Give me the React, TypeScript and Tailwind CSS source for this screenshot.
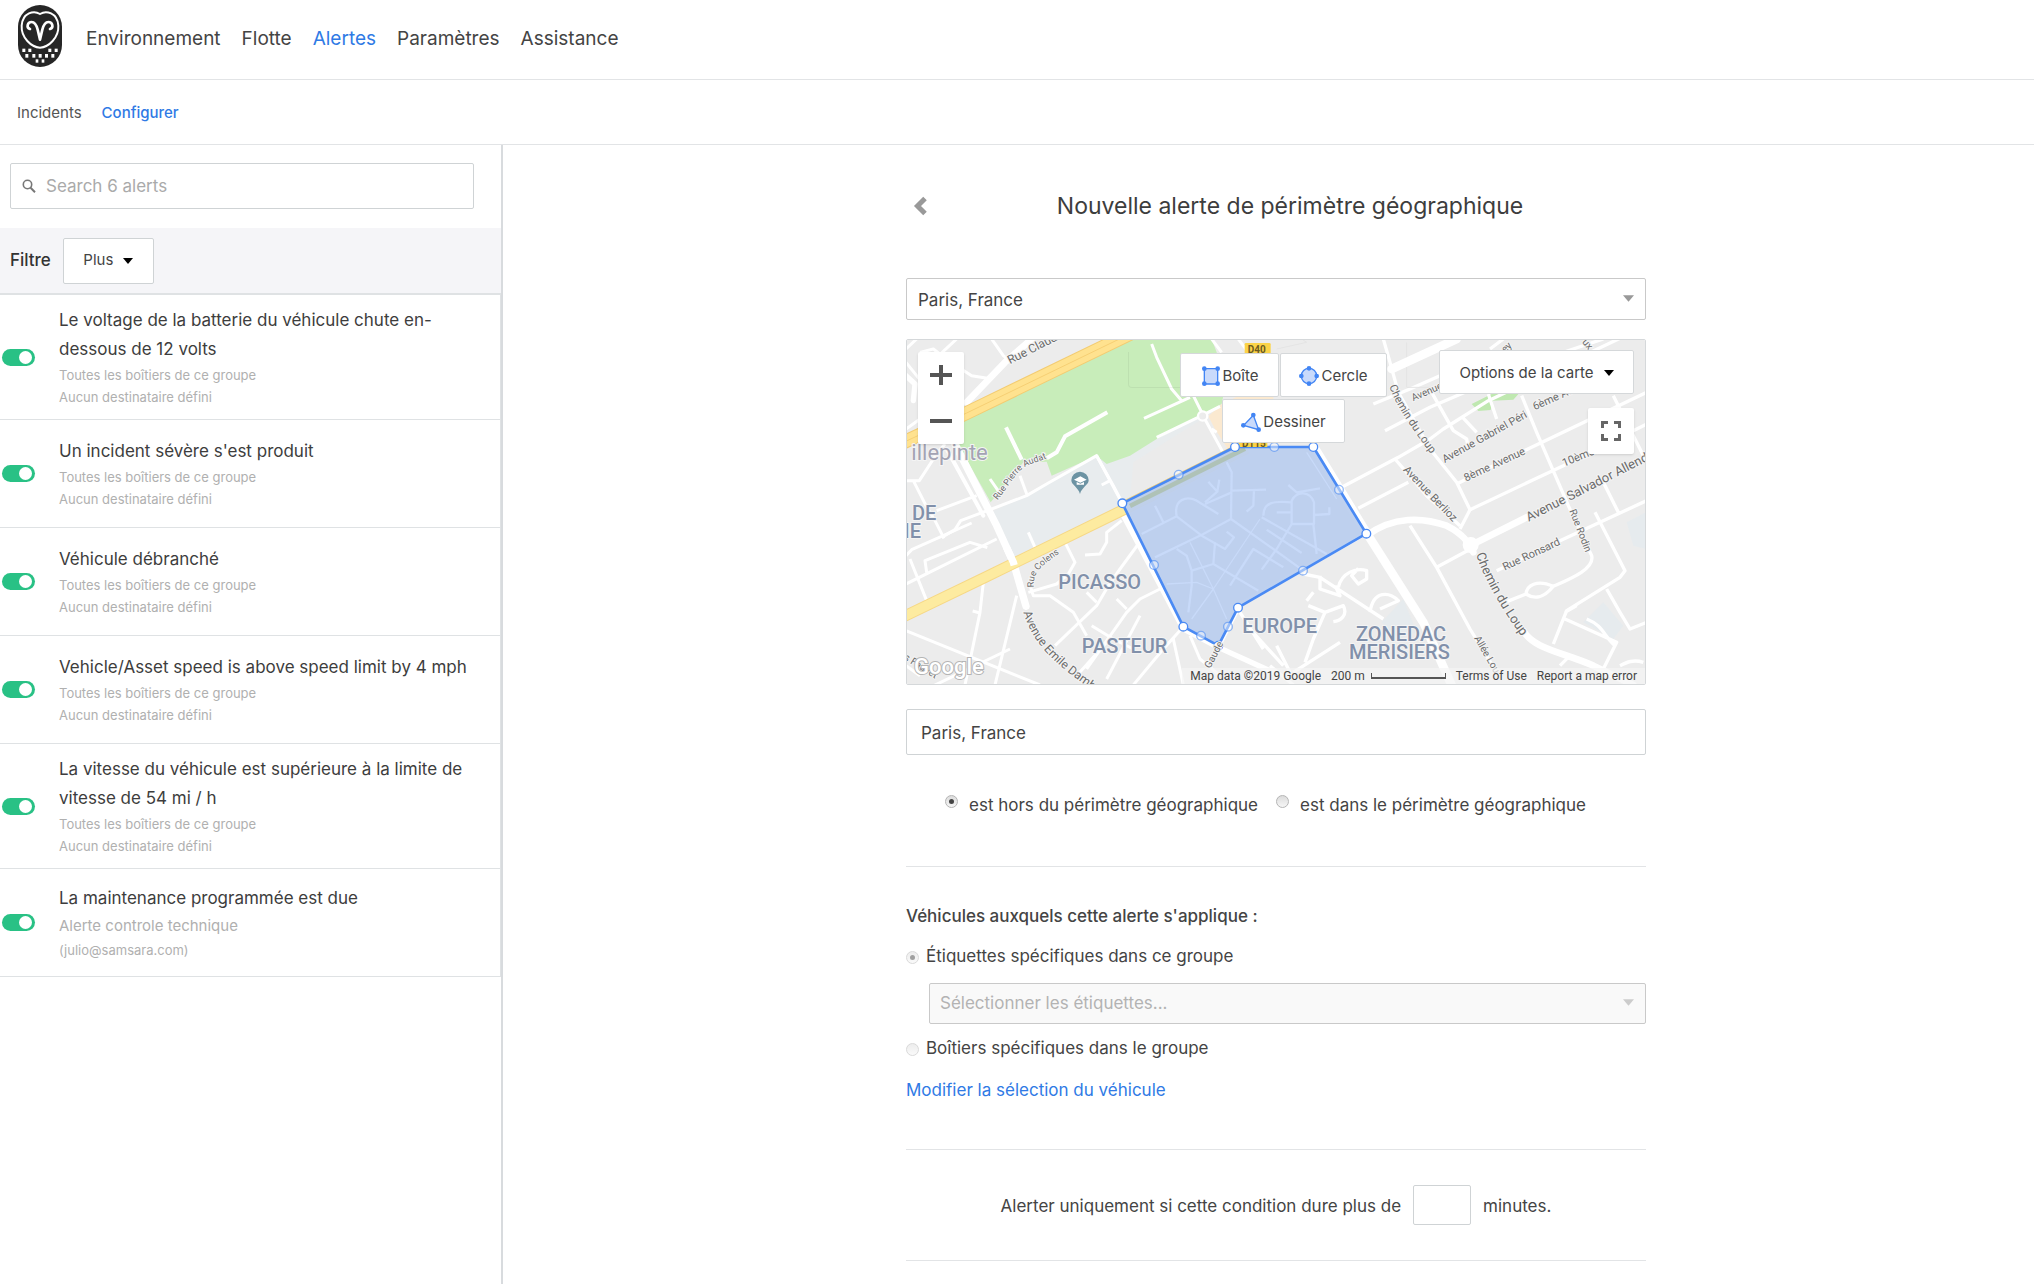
import type { ReactNode } from "react";
import clsx from "clsx";

interface Alert {
  id: string;
  title: string;
  target: string;
  recipient: string;
  largeTarget?: boolean;
}

const GROUP_TARGET = "Toutes les boîtiers de ce groupe";
const NO_RECIPIENT = "Aucun destinataire défini";

const navItems = ["Environnement", "Flotte", "Alertes", "Paramètres", "Assistance"];

const alerts: Alert[] = [
  { id: "battery", title: "Le voltage de la batterie du véhicule chute en-dessous de 12 volts", target: GROUP_TARGET, recipient: NO_RECIPIENT },
  { id: "incident", title: "Un incident sévère s'est produit", target: GROUP_TARGET, recipient: NO_RECIPIENT },
  { id: "unplugged", title: "Véhicule débranché", target: GROUP_TARGET, recipient: NO_RECIPIENT },
  { id: "limit", title: "Vehicle/Asset speed is above speed limit by 4 mph", target: GROUP_TARGET, recipient: NO_RECIPIENT },
  { id: "speed", title: "La vitesse du véhicule est supérieure à la limite de vitesse de 54 mi / h", target: GROUP_TARGET, recipient: NO_RECIPIENT },
  { id: "maintenance", title: "La maintenance programmée est due", target: "Alerte controle technique", recipient: "(julio@samsara.com)", largeTarget: true },
];

function Logo() {
  return (
    <svg className="w-11 h-[62px]" viewBox="0 0 132 186" fill="none" aria-hidden="true">
      <rect width="132" height="186" rx="66" fill="#262626" />
      <path
        d="M66 27 C48 16 14 22 11 62 C9 98 40 127 66 128 C92 127 123 98 121 62 C118 22 84 16 66 27 Z"
        stroke="#fff"
        strokeWidth="6"
      />
      <path
        d="M36 72 C24 68 28 51 41 51 C52 51 56 62 59 74 L66 104 L73 74 C76 62 80 51 91 51 C104 51 108 68 96 72"
        stroke="#fff"
        strokeWidth="8"
        strokeLinecap="round"
        strokeLinejoin="round"
      />
      <g fill="#fff">
        <rect x="13" y="131" width="9" height="10" />
        <rect x="31" y="131" width="9" height="10" />
        <rect x="91" y="131" width="9" height="10" />
        <rect x="110" y="131" width="9" height="10" />
        <rect x="22" y="147" width="9" height="11" />
        <rect x="43" y="147" width="9" height="11" />
        <rect x="62" y="147" width="9" height="11" />
        <rect x="81" y="147" width="9" height="11" />
        <rect x="100" y="147" width="9" height="11" />
        <rect x="53" y="163" width="8" height="10" />
        <rect x="71" y="163" width="8" height="10" />
      </g>
    </svg>
  );
}

function Caret({ className }: { className?: string }) {
  return (
    <svg className={className} viewBox="0 0 10 6" fill="currentColor" aria-hidden="true">
      <path d="M0 0h10L5 6z" />
    </svg>
  );
}

function AlertItem({ alert }: { alert: Alert }) {
  return (
    <li className="flex items-center min-h-[108px] py-[11px] border-b border-r border-[#dfe2e4]">
      <input
        type="checkbox"
        role="switch"
        id={alert.id}
        defaultChecked
        className="appearance-none relative shrink-0 ml-0.5 mr-6 w-[33px] h-[17px] rounded-full bg-gray-300 checked:bg-[#29c185] before:absolute before:right-[3px] before:top-0.5 before:size-[13px] before:rounded-full before:bg-white"
      />
      <label htmlFor={alert.id} className="flex-1 min-w-0 pr-5">
        <span className="block text-[17px] leading-[29px] text-[#3d3d3d]">{alert.title}</span>
        <span
          className={clsx(
            "block text-[#b0b0b0]",
            alert.largeTarget ? "text-[15px] leading-[26px]" : "text-[13px] leading-[22px]"
          )}
        >
          {alert.target}
        </span>
        <span className="block text-[13px] leading-[22px] text-[#b0b0b0]">{alert.recipient}</span>
      </label>
    </li>
  );
}

function Sidebar() {
  return (
    <aside className="w-[503px] shrink-0 border-r-2 border-[#d8dbde]">
      <div className="pl-2.5 pr-[27px] pt-[18px] pb-[19px]">
        <label className="flex items-center gap-2.5 h-[46px] px-[11px] border border-[#cfd3d5] rounded-xs">
          <svg className="size-3.5 text-[#777]" viewBox="0 0 14 14" fill="none" stroke="currentColor" aria-hidden="true">
            <circle cx="5.5" cy="5.5" r="4.2" strokeWidth="1.6" />
            <path d="M8.6 8.8 L13 13.2" strokeWidth="2" />
          </svg>
          <input
            type="text"
            aria-label="Search alerts"
            placeholder="Search 6 alerts"
            className="flex-1 pt-0.5 text-[17px] text-[#444] placeholder:text-[#aaa] outline-none"
          />
        </label>
      </div>
      <div className="flex items-center gap-3 h-[67px] pl-2.5 bg-[#f5f5f8] border-b-2 border-[#dfe2e4]">
        <span className="text-[17px] font-medium text-[#333]">Filtre</span>
        <button type="button" className="flex items-center justify-center gap-2.5 w-[91px] h-[46px] bg-white border border-[#cfd3d5] rounded-xs text-[15px] text-[#444]">
          Plus
          <Caret className="w-2.5 h-1.5 text-black" />
        </button>
      </div>
      <ul>
        {alerts.map((alert) => (
          <AlertItem key={alert.id} alert={alert} />
        ))}
      </ul>
    </aside>
  );
}

const vertices = [
  [667, 523],
  [1005, 354],
  [1240, 354],
  [1399, 614],
  [1014, 836],
  [955, 950],
  [850, 893],
];

const midpoints = [
  [836, 437],
  [1123, 354],
  [1317, 482],
  [1209, 725],
  [984, 893],
  [903, 920],
  [762, 708],
];

// Three drawing units to one screen pixel.
function MapCanvas() {
  return (
    <svg className="block w-full h-full" viewBox="21 33 2214 1032" preserveAspectRatio="xMidYMid slice" fill="none" role="img" aria-label="Carte">
      <defs>
        <path id="audat" d="M292 514 C330 465 350 430 372 415 C395 402 420 396 450 384" />
        <path id="colens" d="M402 775 C398 735 415 715 480 672" />
        <path id="emile" d="M370 850 C400 950 470 1010 590 1092" />
        <path id="loup-north" d="M1468 172 C1485 225 1530 290 1590 372" />
        <path id="loup-south" d="M1728 676 C1750 740 1790 820 1870 930" />
      </defs>
      <rect x="18" y="30" width="2220" height="1038" fill="#ececec" />

      {/* parks and school grounds */}
      <path d="M275 548 L380 500 L445 462 L590 380 L905 245 L975 370 L665 530 L335 690 Z" fill="#e8ecee" />
      <path d="M700 400 L910 268 L975 372 L690 510 Z" fill="#ebebeb" />
      <path d="M690 30 H935 L980 150 L965 225 L900 262 L770 330 L690 380 L620 405 L590 380 L455 440 L440 398 L370 400 L272 520 L165 330 L195 270 Z" fill="#c8edba" />
      <path d="M1715 225 L1775 195 L1860 190 L1840 212 L1778 215 L1772 243 L1735 246 Z" fill="#bfe8b0" />
      <path d="M925 262 L965 225 L1120 150 L1120 330 L985 362 L945 300 Z" fill="#fbe9d0" />
      <path d="M2180 580 L2238 550 V660 L2200 650 Z" fill="#e6ebee" />
      <path d="M2050 880 L2110 820 L2170 890 L2140 930 Z" fill="#e6ebee" />
      <path d="M1445 880 L1510 810 L1550 910 L1500 930 Z" fill="#e6ebee" />

      {/* small streets, west */}
      <g stroke="#fff" strokeWidth="9" strokeLinejoin="round">
        <path d="M100 95 L170 30 M60 70 L100 60 L145 95 L215 140 L262 148 M275 30 L310 80 L335 100 M18 300 L60 270" />
        <path d="M18 100 L90 190 M18 455 L58 455 L110 375 L135 345 M40 455 L78 530 L105 575 L132 628" />
        <path d="M18 60 L50 30 M110 545 L230 500 M125 625 L165 602 L182 575 L270 542 L380 500 L445 462 L590 380 L665 520" />
        <path d="M360 440 L382 500 M270 450 L298 490 M18 680 L35 662 L215 582 M30 690 L82 820 M80 730 L75 695 L210 640 L262 656 M18 765 L290 630" />
        <path d="M250 760 L240 850 L195 1068 M218 846 L240 852 M350 800 L285 1068 M18 905 L420 1068 M18 1010 L60 1040 M330 960 L18 1110" />
        <path d="M385 610 L405 655 M495 640 L525 700 L505 735 L470 765 L385 790 M390 770 L400 800 L450 800 L520 850 L560 920" />
        <path d="M665 575 L620 610 L620 640 L600 675 L555 678 M715 645 L660 720 L625 770 L590 830 L465 950" />
        <path d="M780 780 L720 810 L680 850 L560 1020 M650 810 L680 840 M575 890 L640 930 L700 960 M590 820 L560 790 M620 940 L530 1040 M850 893 L790 960 L700 1068 M820 930 L850 1068 M870 920 L900 990 L960 1040 M720 860 L620 1050" />
        <path d="M318 295 L365 392 M440 388 L470 370 L495 322 L622 250" strokeWidth="12" />
        <path d="M755 45 L770 85 L815 180 L845 215 M732 268 L870 205 M880 200 L910 260 M960 232 L905 260 L770 325 M910 262 L970 372 M935 300 L950 310" />
        <path d="M605 468 L630 455 M935 30 L965 70 M1015 30 L1060 90 M590 380 L640 470 L668 523" />
      </g>
      <circle cx="908" cy="261" r="14" fill="#ececec" stroke="#fff" strokeWidth="7" />

      {/* small streets, east */}
      <g transform="translate(1110 0)" stroke="#fff" strokeWidth="10" strokeLinejoin="round">
        <path d="M340 30 L360 100 L385 190 L480 360 L560 460 L600 542 L570 600 M310 225 L420 180 L510 140 M345 305 L480 235 L655 160" />
        <path d="M215 475 L385 385 L480 330 L520 300 L655 215 L1130 -10 M265 538 L415 460 M375 390 L470 500 L570 590" />
        <path d="M485 190 L550 305 L590 330 L595 360 M575 262 L620 310 M655 195 L680 270" />
        <path d="M560 465 L700 395 L1130 190 M600 542 L880 410 L1130 285 M1030 200 L1130 400 M755 200 L800 310 L895 530 L965 680 C975 720 900 750 850 772 C820 810 790 810 768 795 C770 770 800 750 850 772 M768 795 L705 820" />
        <path d="M500 715 L620 650 M420 590 L500 715 L600 900 L680 1030 M1000 460 L1045 550 M680 725 L870 635 L1130 515 M975 550 L1065 725 L1050 745 L890 845 L850 945 M885 870 L1040 940 L1000 1020 M920 830 L885 850 M1010 780 L1050 850 L1080 900 L1130 880 M950 870 C1000 890 1000 920 1035 950 M870 1010 L900 980" />
        <path d="M660 60 L700 30 M820 90 L1000 30 M1050 1010 C1070 1000 1090 990 1120 1000" />
        <path d="M100 735 L150 745 L340 870 M150 740 L150 780 L210 800 L195 770 M205 775 C215 730 260 715 290 725 L290 750 L265 765 L245 740 L265 718 M110 815 L130 790 M115 830 L165 850 L220 830 C235 860 210 875 190 878 M165 850 L130 930 L105 1000 M300 850 C310 780 360 790 385 815 L330 840 M70 1030 L210 940 M20 950 L60 1030 M-60 900 L40 1010 M-90 850 L-20 960 M0 1010 L70 1068" />
        <path d="M410 40 V175 H510 M20 60 L110 40 L95 30" stroke="#e4e4e4" strokeWidth="3" />
      </g>

      {/* avenues */}
      <g stroke="#fff" strokeLinejoin="round" strokeLinecap="round">
        <path d="M200 220 L315 100 L395 30" strokeWidth="20" />
        <path d="M18 140 L45 165 L40 215" strokeWidth="16" />
        <path d="M165 345 L290 590 L340 700 L378 832" strokeWidth="22" />
        <path d="M140 360 L250 560" strokeWidth="12" />
        <path d="M660 540 L850 900 L955 955 L1120 1030" strokeWidth="16" />
        <path d="M1005 835 L1400 612" strokeWidth="12" />
        <path d="M1240 350 L1400 612 L1570 880 L1660 1080" strokeWidth="26" />
        <path d="M1475 120 L1670 30" strokeWidth="26" />
        <path d="M1400 620 C1480 560 1570 565 1640 590 C1690 615 1705 640 1720 670" strokeWidth="20" />
        <path d="M1720 645 L1880 565" strokeWidth="20" />
        <path d="M1870 905 C1900 960 1990 970 2080 1010 L2200 1068" strokeWidth="20" />
        <path d="M1014 840 L955 955" strokeWidth="12" />
      </g>
      <circle cx="1712" cy="648" r="24" fill="#fff" />

      {/* yellow through roads */}
      <path d="M0 345 L200 252 L720 0" stroke="#f3cc72" strokeWidth="42" />
      <path d="M0 345 L200 252 L720 0" stroke="#ffe28f" strokeWidth="36" />
      <path d="M0 345 L200 252 L720 0" stroke="#f6cf74" strokeWidth="3" />
      <path d="M0 868 L255 745 L665 545 L1040 358" stroke="#f6d886" strokeWidth="34" />
      <path d="M0 868 L255 745 L665 545 L1040 358" stroke="#fdeba0" strokeWidth="28" />
      <path d="M165 345 L290 590 L340 700 L378 832" stroke="#fff" strokeWidth="22" strokeDasharray="0 345 60 1000" />
      <path d="M665 522 L1020 345 L1110 300" stroke="#f6cf74" strokeWidth="8" />

      {/* geofence */}
      <polygon points={vertices.map((p) => p.join(",")).join(" ")} fill="#bccfee" fillOpacity="0.95" />
      <g transform="translate(690 330)" stroke="#c9dafa" strokeWidth="7" strokeLinejoin="round" strokeOpacity="0.9">
        <path d="M290 70 L305 100 L303 240 L220 285 L75 355 M305 155 L408 152 M372 152 L370 200 L350 218 M235 128 L262 158 L225 190 M262 158 L268 122" />
        <path d="M75 200 L100 250 M35 285 L140 232 C130 180 170 170 200 185 L265 225 M140 232 L215 290 L285 330 L312 295 L290 278 M225 195 L305 160" />
        <path d="M303 240 L430 330 L520 395 M400 230 C400 190 430 185 485 190 M440 220 H485 M395 235 L590 345 M485 255 V185 C500 155 540 155 552 190 V255 H485 L440 330 L395 392 M475 138 L500 160 L570 148 M552 228 L598 225 V205 M410 272 L515 342 M550 255 L560 345" />
        <path d="M255 310 L250 375 L185 395 L170 350 L140 330 M185 395 V440 L175 520 M250 375 L385 455 M300 440 L370 330 L460 385" />
        <path d="M180 310 L250 450 L290 540 M110 435 L200 430 L250 450 L185 540 M250 450 L390 240 M530 40 L620 180" strokeWidth="4" />
      </g>
      <path d="M690 531 L1035 359" stroke="#a9bda6" strokeOpacity="0.75" strokeWidth="14" />
      <polygon points={vertices.map((p) => p.join(",")).join(" ")} stroke="#4a8af4" strokeWidth="8" strokeLinejoin="round" />
      <rect x="1018" y="330" width="84" height="24" fill="#fbd348" />
      <text x="1026" y="354" fontSize="30" fontWeight="700" fill="#6b5a1e">D115</text>
      {vertices.map(([x, y]) => (
        <circle key={`v${x}`} cx={x} cy={y} r="13" fill="#fff" stroke="#4a8af4" strokeWidth="4" />
      ))}
      {midpoints.map(([x, y]) => (
        <circle key={`m${x}`} cx={x} cy={y} r="13" fill="#fff" fillOpacity="0.45" stroke="#4a8af4" strokeOpacity="0.6" strokeWidth="4" />
      ))}

      {/* road shield */}
      <rect x="1034" y="42" width="78" height="40" rx="4" fill="#fbd348" />
      <text x="1043" y="72" fontSize="30" fontWeight="700" fill="#6b5a1e">D40</text>

      {/* school pin */}
      <path d="M540 495 C535 475 514 468 514 454 A26 26 0 0 1 566 454 C566 468 545 475 540 495 Z" fill="#6c93a3" />
      <path d="M522 452 L541 442 L560 452 L541 461 Z M530 459 V467 H552 V459 L541 464 Z" fill="#fff" />

      {/* street names */}
      <g fill="#6b6b6b" stroke="#f4f4f4" strokeWidth="6" paintOrder="stroke">
        <text fontSize="36" transform="translate(330 106) rotate(-27)">Rue Claude</text>
        <text fontSize="27"><textPath href="#audat">Rue Pierre Audat</textPath></text>
        <text fontSize="27"><textPath href="#colens">Rue Colens</textPath></text>
        <text fontSize="36"><textPath href="#emile">Avenue Emile Dambel</textPath></text>
        <text fontSize="33"><textPath href="#loup-north">Chemin du Loup</textPath></text>
        <text fontSize="39"><textPath href="#loup-south">Chemin du Loup</textPath></text>
        <text fontSize="30" transform="translate(930 1020) rotate(-62)">Gaude</text>
        <text fontSize="30" transform="translate(10 990) rotate(32)">s Fauvet</text>
        <text fontSize="30" transform="translate(1540 217) rotate(-24)">Avenue</text>
        <text fontSize="33" transform="translate(1634 402) rotate(-29)">Avenue Gabriel Péri</text>
        <text fontSize="33" transform="translate(1698 458) rotate(-25)">8ème Avenue</text>
        <text fontSize="33" transform="translate(1904 244) rotate(-24)">6ème Avenue</text>
        <text fontSize="33" transform="translate(1992 413) rotate(-22)">10ème Av</text>
        <text fontSize="33" transform="translate(1508 424) rotate(46)">Avenue Berlioz</text>
        <text fontSize="39" transform="translate(1886 578) rotate(-27)">Avenue Salvador Allende</text>
        <text fontSize="30" transform="translate(2008 545) rotate(69)">Rue Rodin</text>
        <text fontSize="33" transform="translate(1814 725) rotate(-25)">Rue Ronsard</text>
        <text fontSize="30" transform="translate(1722 928) rotate(60)">Allée Lou</text>
        <text fontSize="30" transform="translate(1804 84) rotate(-45)">ney</text>
        <text fontSize="30" transform="translate(2045 40) rotate(50)">ux</text>
      </g>

      {/* districts */}
      <g fill="#8190aa" stroke="#f4f4f4" strokeWidth="6" paintOrder="stroke" fontSize="60" fontWeight="500">
        <text x="34" y="393" fill="#a3a3b3" fontSize="66" fontWeight="400">illepinte</text>
        <text x="36" y="572">DE</text>
        <text x="12" y="627">IE</text>
        <text x="475" y="781">PICASSO</text>
        <text x="545" y="973">PASTEUR</text>
        <text x="1027" y="911">EUROPE</text>
        <text x="1368" y="936">ZONEDAC</text>
        <text x="1347" y="991">MERISIERS</text>
      </g>
      <text x="42" y="1035" fontSize="66" fontWeight="500" fill="#fff" stroke="#b5b5b5" strokeWidth="6" paintOrder="stroke">Google</text>
    </svg>
  );
}

function ShapeButton({ children, label, width }: { children: ReactNode; label: string; width: string }) {
  return (
    <button type="button" className={clsx("flex items-center justify-center gap-0.5 h-11 pt-0.5 bg-white border border-[#d5d8da] rounded-xs text-[15px] text-[#444]", width)}>
      <svg className="w-5 h-5 shrink-0" viewBox="0 0 60 60" fill="#c9dafb" stroke="#4285f4" strokeWidth="4" aria-hidden="true">
        {children}
      </svg>
      {label}
    </button>
  );
}

function GeofenceMap() {
  return (
    <div className="relative h-[346px] border border-[#d5d8da] rounded-xs overflow-hidden font-['Roboto',sans-serif]">
      <MapCanvas />
      <div className="absolute left-[11px] top-3 flex flex-col w-[46px] h-[92px] bg-white rounded-xs shadow-sm text-[#555]">
        <button type="button" aria-label="Zoom avant" className="flex-1 flex items-center justify-center">
          <svg className="size-[22px]" viewBox="0 0 22 22" stroke="currentColor" strokeWidth="4"><path d="M0 11H22M11 1V21" /></svg>
        </button>
        <button type="button" aria-label="Zoom arrière" className="flex-1 flex items-center justify-center">
          <svg className="size-[22px]" viewBox="0 0 22 22" stroke="currentColor" strokeWidth="4"><path d="M0 11H22" /></svg>
        </button>
      </div>
      <div className="absolute left-[221px] top-3 w-[60px] h-9 border-l border-b border-black/5 rounded-bl-sm" />
      <div className="absolute left-[273px] top-[13px] flex flex-col items-center gap-0.5 font-['Inter',sans-serif]">
        <div className="flex gap-px">
          <ShapeButton label="Boîte" width="w-[99px]">
            <path d="M10 8H50V54H10Z" />
            <g fill="#4285f4" stroke="none"><circle cx="10" cy="8" r="7" /><circle cx="50" cy="8" r="7" /><circle cx="10" cy="53" r="7" /><circle cx="50" cy="53" r="7" /></g>
          </ShapeButton>
          <ShapeButton label="Cercle" width="w-[107px]">
            <circle cx="30" cy="30" r="23" />
            <g fill="#4285f4" stroke="none"><circle cx="30" cy="7" r="7" /><circle cx="30" cy="53" r="7" /><circle cx="7" cy="30" r="7" /><circle cx="53" cy="30" r="7" /></g>
          </ShapeButton>
        </div>
        <ShapeButton label="Dessiner" width="w-[123px]">
          <path d="M37 10L8 40L53 53Z" />
          <g fill="#4285f4" stroke="none"><circle cx="37" cy="9" r="7" /><circle cx="7" cy="40" r="7" /><circle cx="53" cy="53" r="7" /></g>
        </ShapeButton>
      </div>
      <div className="absolute right-[11px] top-2.5 flex flex-col items-end gap-3.5">
        <button type="button" className="flex items-center justify-center gap-2.5 w-[195px] h-11 pt-0.5 bg-white border border-[#d5d8da] rounded-xs text-[15px] text-[#444] font-['Inter',sans-serif]">
          Options de la carte
          <Caret className="w-2.5 h-1.5 text-black" />
        </button>
        <button type="button" aria-label="Plein écran" className="flex items-center justify-center size-[46px] bg-white rounded-xs shadow-sm text-[#666]">
          <svg className="size-5" viewBox="0 0 20 20" fill="none" stroke="currentColor" strokeWidth="3">
            <path d="M1.5 7V1.5H7M13 1.5H18.5V7M18.5 13V18.5H13M7 18.5H1.5V13" />
          </svg>
        </button>
      </div>
      <div className="absolute right-0 bottom-0 flex items-center gap-2.5 h-4 px-2 bg-[#f5f5f5]/70 text-[12px] text-[#444]">
        <span>Map data ©2019 Google</span>
        <span className="flex items-center gap-1.5">
          200 m
          <span className="w-[75px] h-1.5 border-x border-b-2 border-[#555]" />
        </span>
        <a href="#terms">Terms of Use</a>
        <a href="#report">Report a map error</a>
      </div>
    </div>
  );
}

const radioClass =
  "appearance-none shrink-0 flex items-center justify-center size-[13px] rounded-full border border-[#b5b5b5] bg-linear-to-b from-[#dcdcdc] to-[#f6f6f6] checked:before:size-[5px] checked:before:rounded-full checked:before:bg-[#444] disabled:opacity-50";

function AlertForm() {
  return (
    <form className="w-full max-w-[740px] mx-auto pt-[38px] text-[17px] text-[#444]">
      <div className="flex items-center h-[46px]">
        <button type="button" aria-label="Retour" className="flex w-7 pl-[7px] text-[#999]">
          <svg className="w-3.5 h-5" viewBox="0 0 14 20" fill="none" stroke="currentColor" strokeWidth="5">
            <path d="M12 2.5L4.5 10L12 17.5" />
          </svg>
        </button>
        <h1 className="flex-1 text-center text-[23px] leading-7 text-[#3d3d3d]">Nouvelle alerte de périmètre géographique</h1>
      </div>

      <div className="relative mt-[49px]">
        <select aria-label="Lieu" className="appearance-none block w-full h-[42px] pl-[11px] pt-1 bg-white border border-[#c9c9c9] rounded-xs">
          <option>Paris, France</option>
        </select>
        <Caret className="absolute right-3 top-[17px] w-[11px] h-[7px] text-[#999]" />
      </div>

      <div className="mt-[19px]">
        <GeofenceMap />
      </div>

      <input type="text" aria-label="Adresse" defaultValue="Paris, France" className="block w-full h-[46px] mt-6 px-3.5 pt-0.5 border border-[#cfd3d5] rounded-xs" />

      <div className="flex items-center gap-[18px] h-6 mt-[39px] pl-[39px]">
        <label className="flex items-center gap-[11px]">
          <input type="radio" name="zone" defaultChecked className={clsx(radioClass, "mb-2.5")} />
          est hors du périmètre géographique
        </label>
        <label className="flex items-center gap-[11px]">
          <input type="radio" name="zone" className={clsx(radioClass, "mb-2.5")} />
          est dans le périmètre géographique
        </label>
      </div>

      <fieldset className="mt-12 pt-[37px] border-t border-[#e2e4e6]">
        <legend className="sr-only">Véhicules</legend>
        <p className="leading-6 font-medium">Véhicules auxquels cette alerte s'applique :</p>
        <label className="flex items-center gap-[7px] h-6 mt-[17px]">
          <input type="radio" name="vehicles" disabled defaultChecked className={radioClass} />
          Étiquettes spécifiques dans ce groupe
        </label>
        <div className="relative mt-3.5 ml-[23px]">
          <select aria-label="Étiquettes" disabled className="appearance-none block w-full h-[41px] pl-2.5 bg-[#f9f9f9] border border-[#c9c9c9] rounded-xs text-[#b3b3b3] opacity-100">
            <option>Sélectionner les étiquettes...</option>
          </select>
          <Caret className="absolute right-3 top-4 w-[11px] h-[7px] text-[#ccc]" />
        </div>
        <label className="flex items-center gap-[7px] h-6 mt-[13px]">
          <input type="radio" name="vehicles" disabled className={radioClass} />
          Boîtiers spécifiques dans le groupe
        </label>
        <a href="#vehicles" className="block leading-6 mt-[17px] text-[#2f7ae5]">Modifier la sélection du véhicule</a>
      </fieldset>

      <div className="flex items-center justify-center mt-[47px] py-[35px] border-y border-[#e2e4e6]">
        <label htmlFor="duration" className="pt-1">Alerter uniquement si cette condition dure plus de</label>
        <input id="duration" type="text" className="w-[58px] h-10 mx-3 border border-[#cfd3d5] rounded-xs text-center" />
        <span className="pt-1">minutes.</span>
      </div>
    </form>
  );
}

export default function App() {
  return (
    <div className="flex flex-col min-h-screen bg-white font-['Inter',sans-serif]">
      <header className="flex items-center gap-6 h-20 pl-[18px] border-b border-[#e2e4e6]">
        <a href="#home" aria-label="Accueil" className="pb-2">
          <Logo />
        </a>
        <nav className="flex items-center gap-[21px] text-[19px]">
          {navItems.map((item) => (
            <a key={item} href={`#${item}`} className={item === "Alertes" ? "text-[#2f7ae5]" : "text-[#444]"}>
              {item}
            </a>
          ))}
        </nav>
      </header>
      <nav className="flex items-center gap-5 h-[65px] pl-[17px] pt-0.5 border-b border-[#e2e4e6] text-[15px]">
        <a href="#incidents" className="text-[#555]">Incidents</a>
        <a href="#configure" className="font-medium text-[#2f7ae5]">Configurer</a>
      </nav>
      <div className="flex flex-1">
        <Sidebar />
        <main className="flex-1 min-w-0 pl-[15px]">
          <AlertForm />
        </main>
      </div>
    </div>
  );
}
